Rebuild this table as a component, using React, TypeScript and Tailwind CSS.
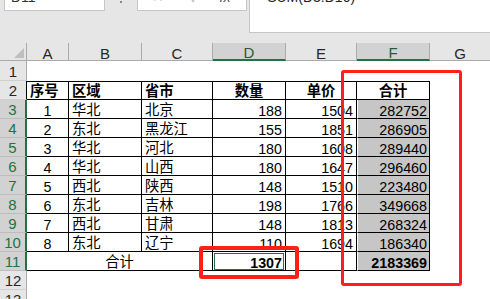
import React from 'react'

const FONT = "font-['Liberation_Sans','Noto_Sans_CJK_SC',sans-serif]"

type Row = { no: number; region: string; city: string; qty: number; price: number; total: number }

const rows: Row[] = [
  { no: 1, region: '华北', city: '北京', qty: 188, price: 1504, total: 282752 },
  { no: 2, region: '东北', city: '黑龙江', qty: 155, price: 1851, total: 286905 },
  { no: 3, region: '华北', city: '河北', qty: 180, price: 1608, total: 289440 },
  { no: 4, region: '华北', city: '山西', qty: 180, price: 1647, total: 296460 },
  { no: 5, region: '西北', city: '陕西', qty: 148, price: 1510, total: 223480 },
  { no: 6, region: '东北', city: '吉林', qty: 198, price: 1766, total: 349668 },
  { no: 7, region: '西北', city: '甘肃', qty: 148, price: 1813, total: 268324 },
  { no: 8, region: '东北', city: '辽宁', qty: 110, price: 1694, total: 186340 },
]

const columns = [
  { key: 'A', w: 'w-[42px]', sel: false },
  { key: 'B', w: 'w-[73px]', sel: false },
  { key: 'C', w: 'w-[71px]', sel: false },
  { key: 'D', w: 'w-[73px]', sel: true },
  { key: 'E', w: 'w-[71px]', sel: false },
  { key: 'F', w: 'w-[73px]', sel: true },
]

// row number on the left edge
function RowHead({ n, sel, edge }: { n: number; sel?: boolean; edge?: boolean }) {
  const look = sel
    ? 'bg-[#d2d2d2] text-[#217346] border-r-2 border-r-[#217346] border-b-[#bdbdbd]'
    : edge
      ? 'bg-[#e6e6e6] text-[#262626] border-r border-r-black border-b-[#d0d0d0]'
      : 'bg-[#e6e6e6] text-[#262626] border-r border-r-[#ababab] border-b-[#d0d0d0]'
  return (
    <div className={`w-[27px] shrink-0 flex items-end justify-center border-b text-[15px] leading-[16px] font-normal ${look}`}>
      {n}
    </div>
  )
}

const cell = 'shrink-0 flex items-end border-r border-b border-black text-[14.3px] leading-[14px]'
const head = `${cell} border-t pb-[1px] font-bold`

function FormulaBar() {
  return (
    <div className="h-[43px] bg-[#e6e6e6] flex items-start text-[14px] leading-[16px]">
      <div className="ml-[4px] w-[101px] h-[11px] bg-white border-x border-b border-[#c6c6c6] overflow-hidden">
        <div className="-mt-[11px] pl-[6px] text-[#333]">D11</div>
      </div>
      <div className="w-[32px] flex justify-center">
        <span className="mt-[1px] w-[2px] h-[2px] bg-[#8a8a8a]" />
      </div>
      <div className="w-[110px] h-[11px] bg-white border-x border-b border-[#c6c6c6] overflow-hidden flex">
        <span className="-mt-[11px] ml-[14px] text-[#bdbdbd]">✕</span>
        <span className="-mt-[11px] ml-[26px] text-[#bdbdbd]">✓</span>
        <span className="-mt-[11px] ml-[20px] italic text-[#555]">fx</span>
      </div>
      <div className="ml-[2px] flex-1 h-[33px] bg-white border-l border-b border-[#c6c6c6] overflow-hidden">
        <div className="-mt-[11px] pl-[9px] text-[#222]">=SUM(D3:D10)</div>
      </div>
    </div>
  )
}

function ColumnHeads() {
  return (
    <div className="flex h-[18px] bg-[#e6e6e6] text-[15px] leading-[13px]">
      <div className="w-[27px] shrink-0 flex items-end justify-end pr-[2px] pb-[2px] border-r border-b border-[#ababab]">
        <svg width="10" height="10" viewBox="0 0 10 10">
          <path d="M10 0 L10 10 L0 10 Z" fill="#bfbfbf" />
        </svg>
      </div>
      {columns.map((c) => (
        <div
          key={c.key}
          className={
            c.sel
              ? `${c.w} shrink-0 flex items-end justify-center border-r border-r-[#ababab] border-b-2 border-b-[#217346] bg-[#d2d2d2] text-[#2a5a3a]`
              : `${c.w} shrink-0 flex items-end justify-center border-r border-b border-[#ababab] text-[#262626]`
          }
        >
          {c.key}
        </div>
      ))}
      <div className="flex-1 flex items-end justify-center border-b border-[#ababab] text-[#262626]">G</div>
    </div>
  )
}

export default function App() {
  return (
    <div className={`relative w-[490px] h-[299px] overflow-hidden bg-white text-black ${FONT}`}>
      <FormulaBar />
      <ColumnHeads />

      {/* row 1 is blank */}
      <div className="flex h-[20px]">
        <RowHead n={1} />
        <div className="flex-1" />
      </div>

      {/* header row */}
      <div className="flex h-[19px]">
        <RowHead n={2} edge />
        <div className={`${head} w-[42px] pl-[3px]`}>序号</div>
        <div className={`${head} w-[73px] pl-[3px]`}>区域</div>
        <div className={`${head} w-[71px] pl-[3px]`}>省市</div>
        <div className={`${head} w-[73px] justify-center`}>数量</div>
        <div className={`${head} w-[71px] justify-center`}>单价</div>
        <div className={`${head} w-[73px] justify-center`}>合计</div>
        <div className="flex-1" />
      </div>

      {rows.map((r, i) => (
        <div key={r.no} className="flex h-[19px]">
          <RowHead n={i + 3} sel />
          <div className={`${cell} w-[42px] justify-center`}>{r.no}</div>
          <div className={`${cell} w-[73px] pl-[3px] pb-[1px]`}>{r.region}</div>
          <div className={`${cell} w-[71px] pl-[3px] pb-[1px]`}>{r.city}</div>
          <div className={`${cell} w-[73px] justify-end pr-[3px]`}>{r.qty}</div>
          <div className={`${cell} w-[71px] justify-end pr-[3px]`}>{r.price}</div>
          <div className={`${cell} w-[73px] justify-end pr-[2px] bg-[#c6c6c6] border-l border-l-white`}>{r.total}</div>
          <div className="flex-1" />
        </div>
      ))}

      {/* totals */}
      <div className="flex h-[19px]">
        <RowHead n={11} sel />
        <div className={`${cell} w-[186px] justify-center pb-[1px]`}>合计</div>
        <div className={`${cell} w-[73px] relative justify-end pr-[3px] font-bold`}>
          <div className="absolute left-[1px] top-[1px] right-[1px] bottom-0 border border-[#217346]" />
          1307
        </div>
        <div className={`${cell} w-[71px]`} />
        <div className={`${cell} w-[73px] justify-end pr-[2px] font-bold bg-[#c6c6c6] border-l border-l-white`}>2183369</div>
        <div className="flex-1" />
      </div>

      <div className="flex h-[19px]">
        <RowHead n={12} />
        <div className="flex-1" />
      </div>
      <div className="flex h-[19px]">
        <RowHead n={13} />
        <div className="flex-1" />
      </div>

      {/* red markers drawn over the sheet */}
      <div className="absolute left-[341px] top-[70px] w-[121px] h-[216px] border-[3px] border-[#ff1f1a] rounded-[3px]" />
      <div className="absolute left-[199px] top-[246px] w-[100px] h-[33px] border-[4px] border-[#ff1f1a] rounded-[3px]" />
    </div>
  )
}
